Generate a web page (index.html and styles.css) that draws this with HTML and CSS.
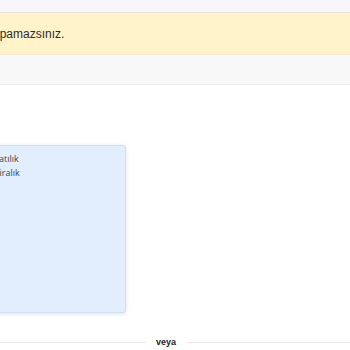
FILE: index.html
```html
<!DOCTYPE html>
<html lang="tr">
<head>
    <meta charset="utf-8">
    <meta name="viewport" content="width=device-width, initial-scale=1.0">
    <title>İlan</title>
    <link rel="stylesheet" href="styles.css">
</head>
<body>
    <div class="topbar"></div>
    <!-- uyarı bandı -->
    <div class="alert">
        <p class="alert-text">İşlem yapamazsınız.</p>
    </div>
    <div class="subbar"></div>

    <div class="main">
        <div class="options">
            <p class="option">Satılık</p>
            <p class="option">Kiralık</p>
        </div>

        <div class="divider">
            <span class="line"></span>
            <span class="divider-text">veya</span>
            <span class="line"></span>
        </div>
    </div>
</body>
</html>
```

FILE: styles.css
```css
body {
    margin: 0;
    padding: 0;
    background-color: #ffffff;
    font-family: 'Liberation Sans', Arial, sans-serif;
    overflow: hidden;
}

.topbar {
    height: 12px;
    background-color: #f7f7f9;
    border-bottom: 1px solid #e6e4dc;
}

.alert {
    height: 41px;
    background-color: #fff3c9;
    border-bottom: 1px solid #f3ead0;
    display: flex;
    align-items: center;
}

.alert-text {
    margin: 0;
    margin-left: -45px;
    font-size: 12px;
    color: #2b2b2b;
}

.subbar {
    height: 29px;
    background-color: #f8f8f8;
    border-bottom: 1px solid #eeeeee;
}

.main {
    padding-top: 60px;
}

.options {
    margin-left: -40px;
    width: 166px;
    height: 168px;
    background-color: #e2eefd;
    border: 1px solid #cfdff3;
    border-radius: 3px;
    box-shadow: 0 1px 4px rgba(120, 150, 190, 0.25);
    padding-top: 6px;
    box-sizing: border-box;
}

.option {
    margin: 0;
    padding-left: 33px;
    font-family: 'Open Sans', sans-serif;
    font-size: 9px;
    line-height: 14px;
    color: #444444;
}

.divider {
    display: flex;
    align-items: center;
    gap: 10px;
    margin-top: 24px;
    margin-left: -18px;
}

.line {
    flex: 1;
    height: 1px;
    background-color: #e8e8e8;
}

.divider-text {
    font-family: 'Liberation Sans', Arial, sans-serif;
    font-size: 9px;
    font-weight: bold;
    color: #222222;
}
```
